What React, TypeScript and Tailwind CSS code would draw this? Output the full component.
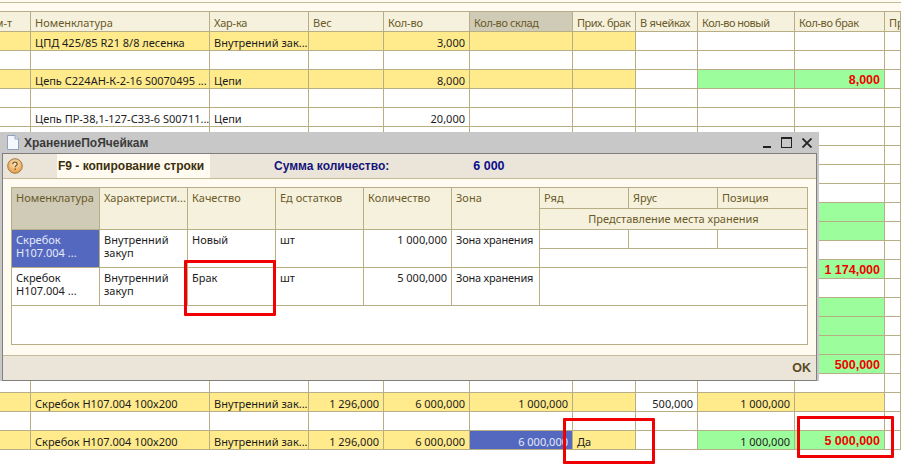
import React from "react";

type Cell = { text?: string; bg?: string; align?: "r"; red?: boolean; light?: boolean };

const YELLOW = "bg-[#ffeb8c]";
const GREEN = "bg-[#9cfd9c]";
const BLUE = "bg-[#5468c0]";

const columns = [
  { title: "м-т", cls: "justify-end !pr-[18px]" },
  { title: "Номенклатура" },
  { title: "Хар-ка", cls: "tracking-[-0.2px]" },
  { title: "Вес" },
  { title: "Кол-во", cls: "tracking-[-0.2px]" },
  { title: "Кол-во склад", active: true, cls: "tracking-[-0.4px]" },
  { title: "Прих. брак", cls: "tracking-[-0.5px]" },
  { title: "В ячейках", cls: "tracking-[-0.3px]" },
  { title: "Кол-во новый", cls: "tracking-[-0.5px]" },
  { title: "Кол-во брак", cls: "tracking-[-0.4px]" },
  { title: "Пр" },
];

const y = (text?: string, align?: "r"): Cell => ({ text, bg: YELLOW, align });
const w = (text?: string, align?: "r"): Cell => ({ text, align });
const g = (text?: string, red = false): Cell => ({ text, bg: GREEN, align: "r", red });

const emptyRow: Cell[] = Array.from({ length: 11 }, () => ({}));
const greenRow = (text?: string): Cell[] => [...emptyRow.slice(0, 9), g(text, true), {}];

const rows: Cell[][] = [
  [y(), y("ЦПД 425/85 R21 8/8 лесенка"), y("Внутренний зак..."), y(), y("3,000", "r"), y(), y(), w(), w(), w(), w()],
  emptyRow,
  [y(), y("Цепь С224АН-К-2-16 S0070495 ..."), y("Цепи"), y(), y("8,000", "r"), y(), y(), w(), g(), g("8,000", true), w()],
  emptyRow,
  [w(), w("Цепь ПР-38,1-127-С33-6 S00711..."), w("Цепи"), w(), w("20,000", "r"), w(), w(), w(), w(), w(), w()],
  emptyRow,
  emptyRow,
  emptyRow,
  emptyRow,
  greenRow(),
  greenRow(),
  emptyRow,
  greenRow("1 174,000"),
  emptyRow,
  greenRow(),
  greenRow(),
  greenRow(),
  greenRow("500,000"),
  emptyRow,
  [y(), y("Скребок Н107.004 100х200"), y("Внутренний зак..."), y("1 296,000", "r"), y("6 000,000", "r"), y("1 000,000", "r"), y(), w("500,000", "r"), y("1 000,000", "r"), y(), w()],
  emptyRow,
  [y(), y("Скребок Н107.004 100х200"), y("Внутренний зак..."), y("1 296,000", "r"), y("6 000,000", "r"), { text: "6 000,000", bg: BLUE, align: "r", light: true }, y("Да"), w(), g("1 000,000"), g("5 000,000", true), w()],
];

function MainCell({ cell }: { cell: Cell }) {
  return (
    <div
      className={`h-[19px] border-r border-b border-[#b8ae85] px-[4px] pt-[2px] flex items-center whitespace-nowrap overflow-hidden ${cell.bg ?? "bg-white"} ${
        cell.align === "r" ? "justify-end" : ""
      } ${cell.red ? "text-[#f00000] font-bold text-[12.5px] font-['Liberation_Sans']" : cell.light ? "text-[#e4e8f8]" : "text-[#1c1c1c]"}`}
    >
      {cell.text}
    </div>
  );
}

function WindowIcon() {
  return (
    <svg width="12" height="15" viewBox="0 0 12 15" className="shrink-0">
      <path d="M0.5 0.5H8L11.5 4V14.5H0.5Z" fill="#f4f8fd" stroke="#8ea3c0" />
      <path d="M8 0.5V4H11.5" fill="#dbe6f3" stroke="#8ea3c0" />
    </svg>
  );
}

function HelpIcon() {
  return (
    <svg width="16" height="16" viewBox="0 0 16 16" className="shrink-0">
      <defs>
        <radialGradient id="help" cx="50%" cy="35%" r="65%">
          <stop offset="0%" stopColor="#ffe9c2" />
          <stop offset="100%" stopColor="#e8993c" />
        </radialGradient>
      </defs>
      <circle cx="8" cy="8" r="7.3" fill="url(#help)" stroke="#9a7a52" />
      <path d="M5.8 6.2C5.8 4.9 6.8 4.2 8 4.2C9.3 4.2 10.2 5 10.2 6C10.2 7.4 8.2 7.5 8.2 9.2" fill="none" stroke="#7a5a34" strokeWidth="1.3" />
      <rect x="7.5" y="10.4" width="1.4" height="1.5" fill="#7a5a34" />
    </svg>
  );
}

const hBase = "border-r border-b border-[#b8ae85] text-[#6b5a2a] px-[4px] pt-[4px] whitespace-nowrap overflow-hidden";
const hCell = `${hBase} bg-[#f5f1dc]`;
const bBase = "border-r border-b border-[#b8ae85] px-[4px] pt-[3px] leading-[13px] whitespace-nowrap overflow-hidden";
const bCell = `${bBase} bg-white text-[#1c1c1c]`;

function ModalTable() {
  return (
    <div className="border border-[#b8ae85] bg-white h-[158px] w-[797px]">
      <div className="grid grid-cols-[88px_88px_88px_88px_88px_88px_89px_89px_1fr] grid-rows-[21px_21px_38px_38px] -mr-px">
        <div className={`${hBase} row-span-2 bg-[#cfcbb6]`}>Номенклатура</div>
        <div className={`${hCell} row-span-2`}>Характеристи...</div>
        <div className={`${hCell} row-span-2`}>Качество</div>
        <div className={`${hCell} row-span-2`}>Ед остатков</div>
        <div className={`${hCell} row-span-2`}>Количество</div>
        <div className={`${hCell} row-span-2`}>Зона</div>
        <div className={hCell}>Ряд</div>
        <div className={hCell}>Ярус</div>
        <div className={hCell}>Позиция</div>
        <div className={`${hCell} col-span-3 text-center`}>Представление места хранения</div>

        <div className={`${bBase} bg-[#5468c0] text-[#e4e8f8]`}>
          Скребок
          <br />
          Н107.004 ...
        </div>
        <div className={bCell}>
          Внутренний
          <br />
          закуп
        </div>
        <div className={bCell}>Новый</div>
        <div className={bCell}>шт</div>
        <div className={`${bCell} text-right`}>1 000,000</div>
        <div className={`${bCell} tracking-[-0.2px]`}>Зона хранения</div>
        <div className="col-span-3 grid grid-cols-[89px_89px_1fr] grid-rows-[19px_19px]">
          <div className="border-r border-b border-[#b8ae85]" />
          <div className="border-r border-b border-[#b8ae85]" />
          <div className="border-r border-b border-[#b8ae85]" />
          <div className="col-span-3 border-r border-b border-[#b8ae85]" />
        </div>

        <div className={bCell}>
          Скребок
          <br />
          Н107.004 ...
        </div>
        <div className={bCell}>
          Внутренний
          <br />
          закуп
        </div>
        <div className={bCell}>Брак</div>
        <div className={bCell}>шт</div>
        <div className={`${bCell} text-right`}>5 000,000</div>
        <div className={`${bCell} tracking-[-0.2px]`}>Зона хранения</div>
        <div className={`${bCell} col-span-3`} />
      </div>
    </div>
  );
}

function StorageWindow() {
  return (
    <div className="absolute left-0 top-[132px] w-[819px] h-[249px] bg-[#c8c8c8] flex flex-col">
      <div className="h-[21px] flex items-center pl-[7px] pr-[7px] gap-[5px]">
        <WindowIcon />
        <span className="font-bold text-[12px] text-[#3a3a3a] font-['Liberation_Sans']">ХранениеПоЯчейкам</span>
        <div className="ml-auto flex items-center gap-[10px]">
          <div className="w-[8px] h-[2px] bg-[#222] mt-[9px]" />
          <div className="w-[11px] h-[11px] border border-[#222] border-t-2" />
          <svg width="10" height="10" viewBox="0 0 10 10">
            <path d="M0.5 0.5L9.5 9.5M9.5 0.5L0.5 9.5" stroke="#222" strokeWidth="1.8" />
          </svg>
        </div>
      </div>
      <div className="mx-[2px] flex-1 border border-[#7f7f7f] bg-[#fffbf0] flex flex-col">
        <div className="h-[25px] bg-[#ebe5d9] border-b border-[#c4bb98] flex items-center pl-[4px] shrink-0 font-['Liberation_Sans']">
          <HelpIcon />
          <div className="ml-[34px] bg-[#fffbf0] h-[24px] w-[153px] flex items-center pl-[1px] font-bold text-[12px] text-[#3c2f0c]">
            F9 - копирование строки
          </div>
          <span className="ml-[64px] font-bold text-[12px] text-[#14147a]">Сумма количество:</span>
          <span className="ml-[84px] font-bold text-[12.5px] text-[#0d0d8a]">6 000</span>
        </div>
        <div className="flex-1 pl-[8px] pt-[8px]">
          <ModalTable />
        </div>
        <div className="h-[25px] bg-[#ebe5d9] border-t border-[#c4bb98] flex items-center justify-end pr-[5px] font-bold text-[12.5px] text-[#5b4a1f] font-['Liberation_Sans']">
          OK
        </div>
      </div>
    </div>
  );
}

function RedBox({ cls }: { cls: string }) {
  return <div className={`absolute border-[3px] border-[#f00000] rounded-[1px] ${cls}`} />;
}

export default function App() {
  return (
    <div className="relative w-[901px] h-[471px] overflow-hidden bg-white text-[11px] leading-none font-['Noto_Sans']">
      <div className="bg-[#fffbf0]">
        <div className="h-[2px]" />
        <div className="h-[9px] border-t border-[#c4bb98]" />
      </div>
      <div className="grid grid-cols-[31px_179px_99px_75px_86px_103px_63px_62px_97px_90px_16px] border-t border-[#b8ae85]">
        {columns.map((c) => (
          <div
            key={c.title}
            className={`h-[20px] border-r border-b border-[#b8ae85] px-[4px] pt-[1px] flex items-center whitespace-nowrap overflow-hidden text-[#6b5a2a] ${
              c.active ? "bg-[#cfcbb6]" : "bg-[#f5f1dc]"
            } ${c.cls ?? ""}`}
          >
            {c.title}
          </div>
        ))}
        {rows.map((row, i) => row.map((cell, j) => <MainCell key={`${i}-${j}`} cell={cell} />))}
      </div>
      <StorageWindow />
      <RedBox cls="left-[184px] top-[260px] w-[92px] h-[56px]" />
      <RedBox cls="left-[563px] top-[418px] w-[92px] h-[46px]" />
      <RedBox cls="left-[797px] top-[416px] w-[97px] h-[42px]" />
    </div>
  );
}
